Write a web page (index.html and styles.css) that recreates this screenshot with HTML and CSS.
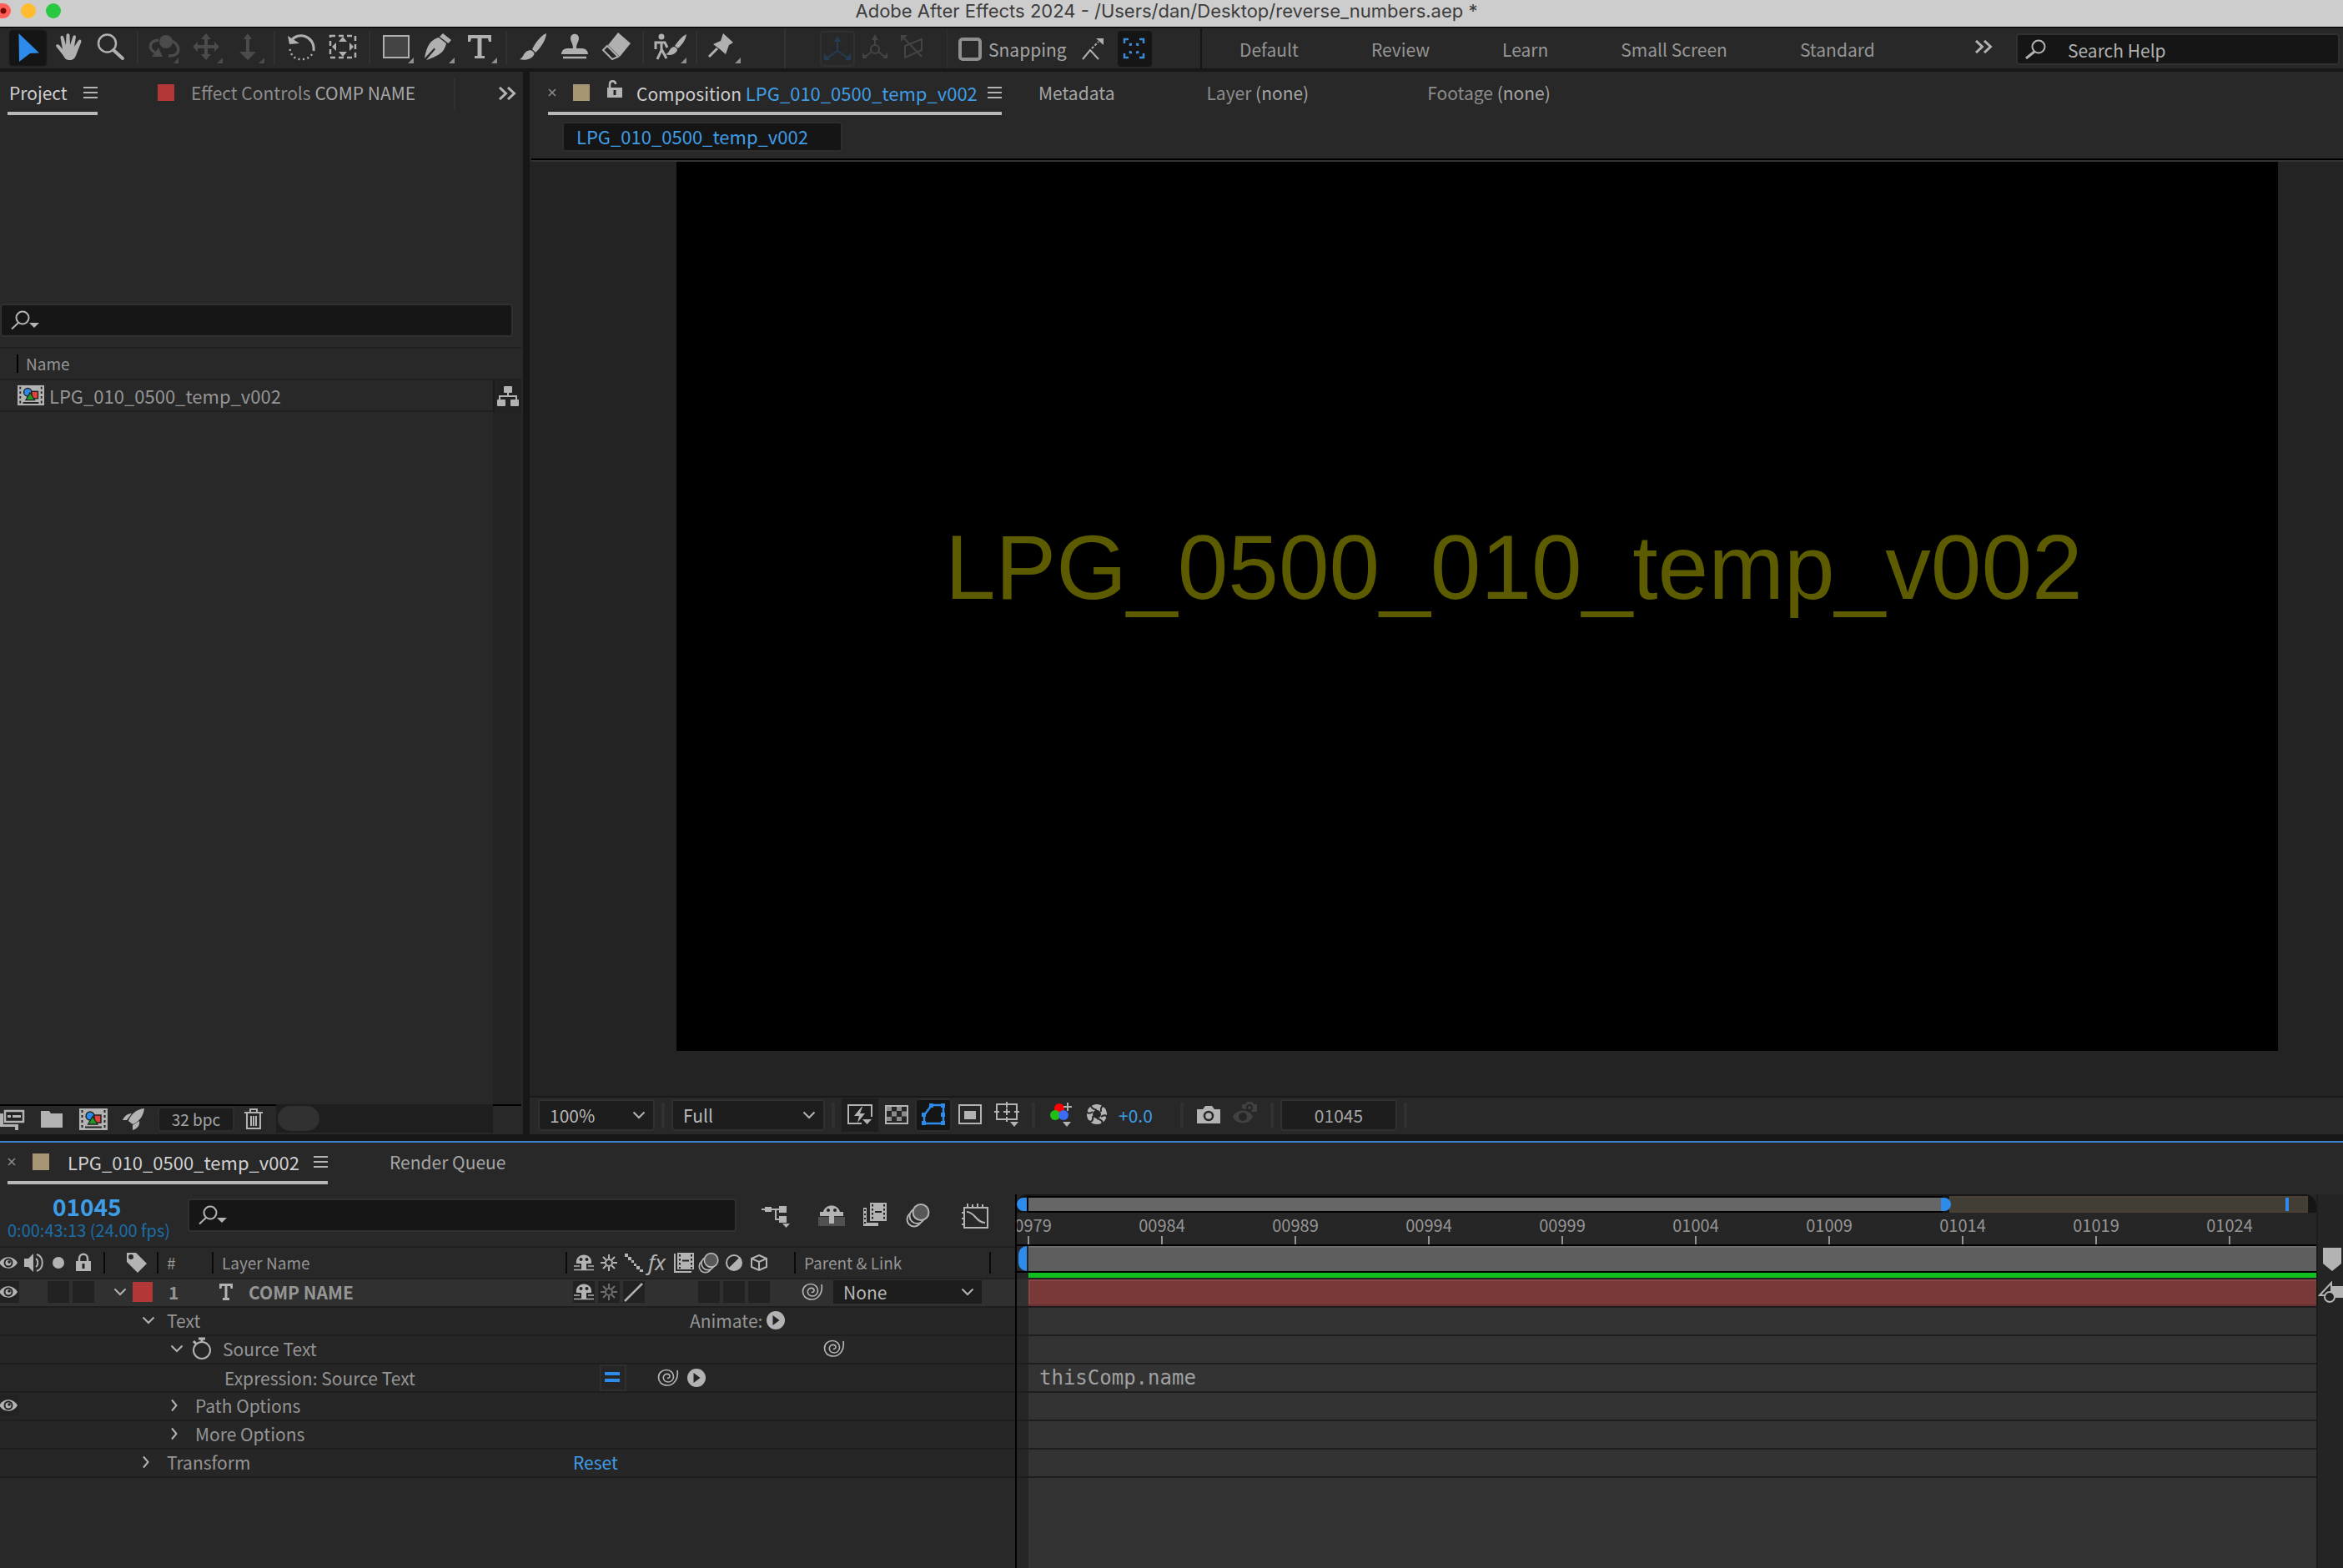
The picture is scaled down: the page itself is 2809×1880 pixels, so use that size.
FILE: index.html
```html
<!DOCTYPE html>
<html lang="en">
<head>
<meta charset="utf-8">
<title>Adobe After Effects 2024</title>
<link rel="stylesheet" href="styles.css">
</head>
<body>
<svg class="sprite" aria-hidden="true">
  <symbol id="eye" viewBox="0 0 26 26"><path d="M2 13C7 4 19 4 24 13C19 22 7 22 2 13Z" fill="#b3b3b3"/><circle cx="13" cy="13" r="5.5" fill="#222"/><circle cx="13" cy="13" r="3.5" fill="#b3b3b3"/><circle cx="14" cy="12" r="1.8" fill="#222"/></symbol>
  <symbol id="down" viewBox="0 0 16 16"><path d="M1.5 4.5L8 11L14.500 4.500" fill="none" stroke="#b3b3b3" stroke-width="2"/></symbol>
  <symbol id="right" viewBox="0 0 16 16"><path d="M2 1.500L7.500 8L2 14.500" fill="none" stroke="#b3b3b3" stroke-width="2"/></symbol>
  <symbol id="spiral" viewBox="0 0 26 26"><path d="M24 4C25.500 13 21 22 12 22C5 22 1.500 17.500 1.500 12.500C1.500 7 6 3.500 11 3.500C16 3.500 19.500 7 19.500 11.500C19.500 15.500 16.500 18 13 18C9.500 18 7.300 15.500 7.300 12.800C7.300 10 9.500 8.300 11.800 8.300C14 8.300 15.500 10 14.800 12C14.300 13.300 12.800 13.700 12 13" fill="none" stroke="#b3b3b3" stroke-width="1.700"/></symbol>
  <symbol id="play" viewBox="0 0 22 22"><circle cx="11" cy="11" r="11" fill="#b3b3b3"/><path d="M7.500 5L15.500 11L7.500 17Z" fill="#222"/></symbol>
  <symbol id="burger" viewBox="0 0 17 16"><path d="M0 2H17M0 8H17M0 14H17" stroke="#b3b3b3" stroke-width="2"/></symbol>
  <symbol id="close" viewBox="0 0 10 10"><path d="M1 1L9 9M9 1L1 9" stroke="#8c8c8c" stroke-width="1.600"/></symbol>
  <symbol id="more" viewBox="0 0 22 16"><path d="M2 1L9.500 8L2 15M12 1L19.500 8L12 15" fill="none" stroke="#b3b3b3" stroke-width="3"/></symbol>
  <symbol id="find" viewBox="0 0 34 24"><circle cx="14" cy="9" r="7.500" fill="none" stroke="#b3b3b3" stroke-width="2"/><path d="M9 15L1 22.500" stroke="#b3b3b3" stroke-width="2"/><path d="M22 15H34L28 21Z" fill="#b3b3b3"/></symbol>
  <symbol id="comp" viewBox="0 0 34 26"><rect width="34" height="26" fill="#b3b3b3"/><path d="M3.500 2V24M30.500 2V24" stroke="#222" stroke-width="2" stroke-dasharray="3 3"/><path d="M7 22.500H27" stroke="#222" stroke-width="2"/><circle cx="13" cy="9" r="5" fill="#2d8ceb" stroke="#222" stroke-width="1.500"/><rect x="18" y="8" width="8" height="9" fill="#e5413c" stroke="#222" stroke-width="1.500"/><path d="M16 9.500L22 19H10.500Z" fill="#1c9a25" stroke="#222" stroke-width="1.300"/></symbol>
  <symbol id="shy" viewBox="0 0 26 26"><path d="M4 14C2 0 24 0 22 14H16V22H10V14Z" fill="#b3b3b3"/><circle cx="9.500" cy="9" r="2" fill="#222"/><circle cx="16.500" cy="9" r="2" fill="#222"/><path d="M1 17H8M18 17H25M1 21.500H25" stroke="#b3b3b3" stroke-width="1.500"/></symbol>
  <symbol id="sun" viewBox="0 0 26 26"><circle cx="13" cy="13" r="4" fill="none" stroke="currentColor" stroke-width="2"/><path d="M13 3V8M13 18V23M3 13H8M18 13H23M6 6L9.500 9.500M16.500 16.500L20 20M20 6L16.500 9.500M9.500 16.500L6 20" stroke="currentColor" stroke-width="2"/></symbol>
  <symbol id="frames" viewBox="0 0 26 26"><path d="M2 2V24H22" fill="none" stroke="#b3b3b3" stroke-width="2"/><rect x="5" y="1" width="20" height="20" fill="#b3b3b3"/><path d="M8 3V20M22 3V20" stroke="#222" stroke-width="2" stroke-dasharray="2.500 2.500"/><path d="M11 10.500H19" stroke="#222" stroke-width="2"/></symbol>
  <symbol id="blur" viewBox="0 0 30 30"><circle cx="10" cy="20" r="8.500" fill="#262626" stroke="#b3b3b3" stroke-width="2"/><circle cx="13.500" cy="16" r="9" fill="#262626" stroke="#b3b3b3" stroke-width="2"/><circle cx="18" cy="11.500" r="9.500" fill="#585858" stroke="#b3b3b3" stroke-width="2"/></symbol>
</svg>

<header class="titlebar">
  <div class="lights"><i class="light light-close"></i><i class="light light-min"></i><i class="light light-max"></i></div>
  <h1 class="window-title">Adobe After Effects 2024 - /Users/dan/Desktop/reverse_numbers.aep *</h1>
</header>

<nav class="toolbar" aria-label="Tools">
  <div class="tools">
    <button class="tool" aria-label="Selection"><svg viewBox="0 0 50 48"><rect x="3" y="2" width="45" height="43" rx="4" fill="#151515" stroke="#1e1e1e"/><path d="M14.500 6L39 29.500L28 30L15 40Z" fill="#2d8ceb"/></svg></button>
    <button class="tool" aria-label="Hand"><svg viewBox="0 0 50 48"><path d="M20 36C17 31 13 26 9.500 22C8 19.500 11 18.500 13 20L17 25L14.500 11C14.500 8.500 17.500 8 18.300 10.500L21 20L21.500 8C22 5.500 25 5.500 25.500 8L26 20L29.500 9.500C30.500 7.500 33 8 33 10.500L31 22L36 14.500C38 12.500 40 14 39.300 16.500L34 30C32 36 30 38 26 38C23 38 21.500 37.500 20 36Z" fill="#b0b0b0"/></svg></button>
    <button class="tool" aria-label="Zoom"><svg viewBox="0 0 50 48"><circle cx="20.500" cy="18" r="10.500" fill="none" stroke="#b0b0b0" stroke-width="2.500"/><path d="M28 26L39 36" stroke="#b0b0b0" stroke-width="4" stroke-linecap="round"/></svg></button>
    <i class="tool-sep"></i>
    <button class="tool" aria-label="Orbit camera"><svg viewBox="0 0 50 48"><circle cx="27" cy="16" r="8" fill="#4b4b4b"/><path d="M18 14C7 15 5 24 14 29M34 15C45 20 45 34 30 33" fill="none" stroke="#4b4b4b" stroke-width="3.500"/><path d="M18 23L23 34H10Z" fill="#4b4b4b"/><path d="M42 35V42H36Z" fill="#4b4b4b"/></svg></button>
    <button class="tool" aria-label="Pan camera"><svg viewBox="0 0 50 48"><path d="M25 11V33M13 22H37" stroke="#4b4b4b" stroke-width="4"/><path d="M25 6L31 13H19ZM25 38L31 31H19ZM9 22L15 16V28ZM41 22L35 16V28Z" fill="#4b4b4b"/><path d="M45 35V42H38Z" fill="#4b4b4b"/></svg></button>
    <button class="tool" aria-label="Dolly camera"><svg viewBox="0 0 50 48"><path d="M25 10V32" stroke="#4b4b4b" stroke-width="4"/><path d="M25 6L30 13H20ZM25 38L35 28H15Z" fill="#4b4b4b"/><path d="M45 35V42H38Z" fill="#4b4b4b"/></svg></button>
    <i class="tool-sep"></i>
    <button class="tool" aria-label="Rotation"><svg viewBox="0 0 50 48"><path d="M13 15C21 3 42 9 40 27" fill="none" stroke="#b0b0b0" stroke-width="3"/><path d="M9 9L11 19L23 18Z" fill="#b0b0b0"/><path d="M38 31C34 38 20 40 14 32L11 24" fill="none" stroke="#b0b0b0" stroke-width="2.500" stroke-dasharray="2 3.500"/></svg></button>
    <button class="tool" aria-label="Pan behind"><svg viewBox="0 0 50 48"><rect x="10" y="9" width="30" height="26" fill="none" stroke="#b0b0b0" stroke-width="2.500" stroke-dasharray="6 4"/><path d="M25 10L30 16H20ZM25 34L30 28H20ZM12 22L17 17V27ZM38 22L33 17V27Z" fill="#b0b0b0"/></svg></button>
    <i class="tool-sep"></i>
    <button class="tool" aria-label="Rectangle"><svg viewBox="0 0 50 48"><rect x="10" y="9" width="30" height="26" fill="#444" stroke="#b0b0b0" stroke-width="2"/><path d="M46 35V42H39Z" fill="#8f8f8f"/></svg></button>
    <button class="tool" aria-label="Pen"><svg viewBox="0 0 50 48"><path d="M26 11L35 18C33 27 29 32 11 38L22 25L20.500 23.500L9 36C12 20 16 14 26 11Z" fill="#b0b0b0"/><path d="M31 6L41 14L37.500 18L27 10Z" fill="#b0b0b0"/><path d="M45 35V42H38Z" fill="#8f8f8f"/></svg></button>
    <button class="tool" aria-label="Type"><svg viewBox="0 0 50 48"><path d="M11 8H39V16H36L35 12H27.500V33H31V36H19V33H22.500V12H15L14 16H11Z" fill="#b0b0b0"/><path d="M46 35V42H39Z" fill="#8f8f8f"/></svg></button>
    <i class="tool-sep"></i>
    <button class="tool" aria-label="Brush"><svg viewBox="0 0 50 48"><path d="M41 6C41 13 34 24 28 29L24 25C28 17 34 9 41 6Z" fill="#b0b0b0"/><path d="M22 26C25 27 27 29 26.500 31C24 37 16 39 9 37C15 34 13 27 22 26Z" fill="#b0b0b0"/></svg></button>
    <button class="tool" aria-label="Clone stamp"><svg viewBox="0 0 50 48"><path d="M20 12C20 5 30 5 30 12C30 16 27 18 27 24H34C38 24 41 27 41 31H9C9 27 12 24 16 24H23C23 18 20 16 20 12Z" fill="#b0b0b0"/><path d="M11 35H39" stroke="#b0b0b0" stroke-width="2.500"/></svg></button>
    <button class="tool" aria-label="Eraser"><svg viewBox="0 0 50 48"><path d="M27 5L42 18L29 34L15 20Z" fill="#b0b0b0"/><path d="M14 21L9 26L20 37L27 34Z" fill="none" stroke="#b0b0b0" stroke-width="2"/></svg></button>
    <i class="tool-sep"></i>
    <button class="tool" aria-label="Roto brush"><svg viewBox="0 0 50 48"><circle cx="15" cy="10" r="3.500" fill="#b0b0b0"/><path d="M8 25V17H19L22 23M15 16V26L10 37M15 25L21 36" fill="none" stroke="#b0b0b0" stroke-width="3"/><path d="M45 7C44 15 39 20 35 24L31 21C35 15 39 10 45 7ZM30 22C34 23 35 26 33 28C30 32 24 33 20 31C25 30 24 23 30 22Z" fill="#b0b0b0"/><path d="M45 35V42H38Z" fill="#8f8f8f"/></svg></button>
    <i class="tool-sep"></i>
    <button class="tool" aria-label="Puppet pin"><svg viewBox="0 0 50 48"><path d="M25 6L37 17L32 20L28 31L21 25L13 19L22 15Z" fill="#b0b0b0"/><path d="M18 24L8 34" stroke="#b0b0b0" stroke-width="3"/><path d="M46 35V42H39Z" fill="#8f8f8f"/></svg></button>
  </div>
  <div class="axis-tools">
    <button class="tool" aria-label="Local axis"><svg viewBox="0 0 50 48"><rect x="5" y="4" width="40" height="41" rx="3" fill="none" stroke="#303030" stroke-width="2"/><path d="M25 12V27L12 36M25 27L38 36" fill="none" stroke="#253c56" stroke-width="2"/><path d="M25 9L29 16H21ZM9 38V30L16 38ZM41 38V30L34 38Z" fill="#253c56"/></svg></button>
    <button class="tool" aria-label="World axis"><svg viewBox="0 0 50 48"><circle cx="20" cy="25" r="5" fill="none" stroke="#444" stroke-width="2"/><path d="M20 9V20M16 28L7 35M24 28L33 35" stroke="#444" stroke-width="2"/><path d="M20 7L24 14H16ZM5 36V29L11 36ZM35 36V29L29 36Z" fill="#444"/></svg></button>
    <button class="tool" aria-label="View axis"><svg viewBox="0 0 50 48"><path d="M6 20V35L26 26V13L6 21M5 12L26 34" fill="none" stroke="#444" stroke-width="2"/><path d="M1 8H9L1 16Z" fill="#444"/></svg></button>
  </div>
  <label class="snapping"><input type="checkbox">Snapping</label>
  <button class="snap-btn" aria-label="Snap edges"><svg viewBox="0 0 42 48"><path d="M8 37L17 26L27 37" fill="none" stroke="#b0b0b0" stroke-width="2"/><path d="M19 24L27 16" stroke="#b0b0b0" stroke-width="2" stroke-dasharray="3 2"/><path d="M24 12H33V20Z" fill="#b0b0b0"/></svg></button>
  <button class="snap-btn" aria-label="Snap features"><svg viewBox="0 0 42 48"><rect x="1" y="3" width="41" height="43" rx="4" fill="#151515"/><path d="M9 18V13H14M27 13H32V18M32 30V35H27M14 35H9V30M16 21V19H18M23 19H25V21M25 27V29H23M18 29H16V27" fill="none" stroke="#3d8ad8" stroke-width="2.500"/></svg></button>
  <div class="workspaces">
    <button>Default</button><button>Review</button><button>Learn</button><button>Small Screen</button><button>Standard</button>
  </div>
  <button class="ws-more" aria-label="More workspaces"><svg viewBox="0 0 22 16"><use href="#more"/></svg></button>
  <label class="help"><svg viewBox="0 0 25 24"><circle cx="16" cy="9" r="7.500" fill="none" stroke="#b3b3b3" stroke-width="2"/><path d="M11 15L1 23" stroke="#b3b3b3" stroke-width="3"/></svg><input type="text" placeholder="Search Help" aria-label="Search Help"></label>
</nav>

<main class="panels">
  <section class="project">
    <div class="tabs">
      <button class="tab tab-project on">Project<svg class="burger" viewBox="0 0 17 16"><use href="#burger"/></svg></button>
      <button class="tab tab-effects"><i class="chip red"></i><span>Effect Controls <b>COMP NAME</b></span></button>
      <button class="tab-more" aria-label="More panels"><svg viewBox="0 0 22 16"><use href="#more"/></svg></button>
    </div>
    <div class="preview"></div>
    <label class="search project-search"><svg viewBox="0 0 34 24"><use href="#find"/></svg><input type="text" aria-label="Search project"></label>
    <div class="files">
      <table class="file-table">
        <colgroup><col><col class="flow-col"></colgroup>
        <thead><tr><th colspan="2">Name</th></tr></thead>
        <tbody><tr><td class="file"><span class="comp-name"><svg viewBox="0 0 34 26"><use href="#comp"/></svg>LPG_010_0500_temp_v002</span></td><td class="flow"><svg viewBox="0 0 28 26"><path d="M14 8V13M4 18V13H24V18" fill="none" stroke="#b3b3b3" stroke-width="2"/><rect x="9" y="1" width="10" height="8" rx="1" fill="#b3b3b3"/><rect x="1" y="17" width="10" height="8" rx="1" fill="#b3b3b3"/><rect x="17" y="17" width="10" height="8" rx="1" fill="#b3b3b3"/></svg></td></tr></tbody>
      </table>
      <div class="file-rest"><i></i></div>
    </div>
    <footer class="project-bar">
      <div class="project-actions">
        <button class="pa-1" aria-label="Interpret footage"><svg viewBox="0 0 30 26"><path d="M0 6H4V19H22V26H18V22H0Z" fill="#b3b3b3"/><rect x="6" y="3" width="22" height="13" fill="#222" stroke="#b3b3b3" stroke-width="2.500"/><path d="M9 9.500H13M15 9.500H25" stroke="#b3b3b3" stroke-width="3"/></svg></button>
        <button class="pa-2" aria-label="New folder"><svg viewBox="0 0 28 24"><path d="M1 2H11L13 5H27V22H1Z" fill="#b3b3b3"/></svg></button>
        <button class="pa-3" aria-label="New composition"><svg viewBox="0 0 34 26"><use href="#comp"/></svg></button>
        <button class="pa-4" aria-label="Project settings"><svg viewBox="0 0 28 28"><path d="M27 1C17 2 11 8 8 16L13 20C21 17 26 10 27 1ZM12 7C6 7 3 11 1 15H6ZM21 16C22 21 19 25 13 27V21Z" fill="#b3b3b3"/></svg></button>
        <button class="bpc">32 bpc</button>
        <button class="pa-5" aria-label="Delete"><svg viewBox="0 0 22 26"><path d="M0 5H22M7 4V1H15V4M3 6V24H19V6M8 9V21M11 9V21M14 9V21" fill="none" stroke="#b3b3b3" stroke-width="2"/></svg></button>
      </div>
      <div class="hscroll"><i></i></div><div class="hscroll-end"></div>
    </footer>
  </section>

  <section class="composition">
    <div class="tabs">
      <button class="tab tab-comp on"><svg class="x" viewBox="0 0 10 10"><use href="#close"/></svg><i class="chip tan"></i><svg class="lock" viewBox="0 0 18 22"><path d="M3 10V5C3 0 10 0 10 5" fill="none" stroke="#b3b3b3" stroke-width="2.500"/><rect y="9" width="18" height="12" fill="#b3b3b3"/><path d="M9 12V18" stroke="#222" stroke-width="3"/></svg><span>Composition <em class="comp-name">LPG_010_0500_temp_v002</em></span><svg class="burger" viewBox="0 0 17 16"><use href="#burger"/></svg></button>
      <button class="tab tab-meta"><b>Metadata</b></button>
      <button class="tab tab-layer"><span>Layer <b>(none)</b></span></button>
      <button class="tab tab-foot"><span>Footage <b>(none)</b></span></button>
    </div>
    <div class="crumbs"><button class="crumb comp-name">LPG_010_0500_temp_v002</button></div>
    <div class="viewer"><div class="canvas">LPG_0500_010_temp_v002</div></div>
    <footer class="viewer-bar">
      <span class="select zoom"><select aria-label="Magnification"><option>100%</option></select><svg viewBox="0 0 16 16"><use href="#down"/></svg></span>
      <i class="vb-sep"></i>
      <span class="select quality"><select aria-label="Resolution"><option>Full</option></select><svg viewBox="0 0 16 16"><use href="#down"/></svg></span>
      <i class="vb-sep"></i>
      <div class="view-btns">
        <button class="vb dark" aria-label="Fast previews"><svg viewBox="0 0 44 40"><path d="M36 22V8H8V30H24" fill="none" stroke="#b3b3b3" stroke-width="2"/><path d="M24 10L15 21H21L19 29L28 18H22L25 10Z" fill="#b3b3b3"/><path d="M25 25H36L30.500 31Z" fill="#b3b3b3"/></svg></button>
        <button class="vb" aria-label="Transparency grid"><svg viewBox="0 0 44 40"><rect x="9" y="9" width="26" height="21" fill="#262626" stroke="#b3b3b3" stroke-width="2"/><path d="M10 12.500H34M10 24.500H34" stroke="#8b8b8b" stroke-width="5" stroke-dasharray="6 6"/><path d="M16 18.500H34" stroke="#8b8b8b" stroke-width="6" stroke-dasharray="6 6"/></svg></button>
        <button class="vb active" aria-label="Mask visibility"><svg viewBox="0 0 44 40"><path d="M11 30V20L20 8H34V30Z" fill="none" stroke="#2d8ceb" stroke-width="2.500"/><path d="M8 27h5v5h-5zM8 17h5v5h-5zM17 6h5v5h-5zM31 6h5v5h-5zM31 17h5v5h-5zM31 27h5v5h-5z" fill="#2d8ceb"/></svg></button>
        <button class="vb" aria-label="Region of interest"><svg viewBox="0 0 44 40"><rect x="9" y="8" width="26" height="22" fill="none" stroke="#b3b3b3" stroke-width="2"/><rect x="15" y="15" width="14" height="10" fill="#b3b3b3"/></svg></button>
        <button class="vb" aria-label="Guides"><svg viewBox="0 0 44 40"><rect x="10" y="7" width="24" height="18" fill="none" stroke="#b3b3b3" stroke-width="2"/><path d="M22 4V11M22 22V28M7 16H13M31 16H37M18 16H26M22 12V20" stroke="#b3b3b3" stroke-width="2"/><path d="M26 28H36L31 34Z" fill="#b3b3b3"/></svg></button>
      </div>
      <i class="vb-sep"></i>
      <button class="vb" aria-label="Channels"><svg viewBox="0 0 44 40"><circle cx="21" cy="12" r="6" fill="#f00"/><circle cx="16" cy="20" r="6" fill="#1fbf14"/><circle cx="26" cy="20" r="6" fill="#3a6cf5"/><path d="M31 5V15M26 10H36" stroke="#b3b3b3" stroke-width="2"/><path d="M25 28H35L30 34Z" fill="#b3b3b3"/></svg></button>
      <button class="vb" aria-label="Reset exposure"><svg viewBox="0 0 44 40"><circle cx="22" cy="19" r="12" fill="#b3b3b3"/><circle cx="22" cy="19" r="5" fill="#262626"/><path d="M22 14C17 13 14 10 15 7M27 16C26 11 28 8 32 10M27 22C31 19 34 20 34 23M22 24C27 25 30 28 28 31M17 21C18 26 16 29 12 27M17 16C13 19 10 18 10 15" fill="none" stroke="#262626" stroke-width="2"/></svg></button>
      <button class="exposure">+0.0</button>
      <i class="vb-sep"></i>
      <button class="vb" aria-label="Take snapshot"><svg viewBox="0 0 44 40"><path d="M8 13H15L18 9H26L29 13H36V30H8Z" fill="#b3b3b3"/><circle cx="22" cy="21" r="5" fill="none" stroke="#262626" stroke-width="2.500"/></svg></button>
      <button class="vb" aria-label="Show snapshot"><svg viewBox="0 0 44 40"><path d="M7 22C11 12 27 12 31 22C27 32 11 32 7 22Z" fill="#414141"/><circle cx="19" cy="22" r="5" fill="#262626"/><path d="M18 7H22L24 4H30L32 7H36V16H30L27 14L18 12Z" fill="#414141"/><circle cx="27" cy="11" r="3" fill="none" stroke="#262626" stroke-width="2"/></svg></button>
      <i class="vb-sep"></i>
      <button class="frame-no">01045</button>
      <i class="vb-sep"></i>
    </footer>
  </section>
</main>

<section class="timeline">
  <div class="tabs">
    <button class="tab tab-tl on"><svg class="x" viewBox="0 0 10 10"><use href="#close"/></svg><i class="chip tan"></i><span class="comp-name">LPG_010_0500_temp_v002</span><svg class="burger" viewBox="0 0 17 16"><use href="#burger"/></svg></button>
    <button class="tab tab-rq"><b>Render Queue</b></button>
  </div>
  <div class="tl-body">
    <div class="outline">
      <div class="tl-top">
        <div class="time"><strong>01045</strong><span>0:00:43:13 (24.00 fps)</span></div>
        <label class="search"><svg viewBox="0 0 34 24"><use href="#find"/></svg><input type="text" aria-label="Search layers"></label>
        <button class="tt t1" aria-label="Mini flowchart"><svg viewBox="0 0 34 30"><path d="M0 8H28M17 8V20H28" fill="none" stroke="#b3b3b3" stroke-width="2"/><path d="M4 5h8v6h-8zM21 4h9v8h-9zM21 16h9v8h-9zM25 25H34L29.500 30Z" fill="#b3b3b3"/></svg></button>
        <button class="tt t2" aria-label="Hide shy layers"><svg viewBox="0 0 34 30"><rect x="1" y="17" width="32" height="11" fill="#505050"/><path d="M3 11H7C9 1 25 1 27 11H31V16H3ZM14 15H20V25H14Z" fill="#b3b3b3"/><circle cx="13" cy="9" r="2" fill="#222"/><circle cx="21" cy="9" r="2" fill="#222"/></svg></button>
        <button class="tt t3" aria-label="Frame blending"><svg viewBox="0 0 28 28"><path d="M2 6V26H18" fill="none" stroke="#b3b3b3" stroke-width="4"/><path d="M2 8V26" stroke="#222" stroke-width="2" stroke-dasharray="2 3"/><rect x="8" y="0" width="20" height="22" fill="#b3b3b3"/><path d="M11 2V21M25 2V21" stroke="#222" stroke-width="2" stroke-dasharray="2.500 2.500"/><path d="M14 11H22" stroke="#222" stroke-width="2"/></svg></button>
        <button class="tt t4" aria-label="Motion blur"><svg viewBox="0 0 30 30"><use href="#blur"/></svg></button>
        <button class="tt t5" aria-label="Graph editor"><svg viewBox="0 0 34 32"><rect x="4" y="6" width="28" height="24" fill="none" stroke="#b3b3b3" stroke-width="2"/><path d="M8 6V1M14 6V2M20 6V1M26 6V2M4 12H1M4 19H1M4 26H1M7 11C17 11 18 24 29 24" fill="none" stroke="#b3b3b3" stroke-width="2"/></svg></button>
      </div>
      <div class="cols head">
        <div class="av">
          <svg class="first" viewBox="0 0 26 26"><use href="#eye"/></svg>
          <svg viewBox="0 0 26 26"><path d="M2 8H7L13 2V24L7 18H2Z" fill="#b3b3b3"/><path d="M16 8C19 10 19 16 16 18M17 3C26 6 26 20 17 23" fill="none" stroke="#b3b3b3" stroke-width="2"/></svg>
          <svg viewBox="0 0 26 26"><circle cx="13" cy="13" r="7" fill="#b3b3b3"/></svg>
          <svg viewBox="0 0 26 26"><path d="M8 12V8C8 1 18 1 18 8V12" fill="none" stroke="#b3b3b3" stroke-width="2.500"/><rect x="4" y="11" width="18" height="12" fill="#b3b3b3"/><path d="M13 14V20" stroke="#222" stroke-width="3"/></svg>
        </div>
        <div class="cell tag"><svg viewBox="0 0 26 26"><path d="M1 1H12L25 14L14 25L1 12Z" fill="#b3b3b3"/><circle cx="6" cy="6" r="3" fill="#262626"/></svg></div>
        <div class="cell">#</div>
        <div class="cell">Layer Name</div>
        <div class="cell switches">
          <svg viewBox="0 0 26 26"><use href="#shy"/></svg>
          <svg viewBox="0 0 26 26"><use href="#sun"/></svg>
          <svg viewBox="0 0 26 26"><path d="M2 2h4v4h-4zM6 6h4v4h-4zM10 10h3v3h-3zM13 14h3v3h-3zM16 17h4v4h-4zM20 21h4v3h-4z" fill="#b3b3b3"/></svg>
          <span class="fx">fx</span>
          <svg viewBox="0 0 26 26"><use href="#frames"/></svg>
          <svg viewBox="0 0 30 30"><use href="#blur"/></svg>
          <svg viewBox="0 0 26 26"><circle cx="13" cy="13" r="9" fill="#262626" stroke="#b3b3b3" stroke-width="2"/><path d="M20 6A10 10 0 0 1 6 20Z" fill="#b3b3b3"/></svg>
          <svg viewBox="0 0 26 26"><path d="M13 4L22 8V18L13 22L4 18V8ZM4 8L13 12L22 8M13 12V22" fill="none" stroke="#b3b3b3" stroke-width="2"/></svg>
        </div>
        <div class="cell parent-h">Parent &amp; Link</div>
        <div class="cell"></div>
      </div>
      <div class="cols row layer">
        <div class="av"><svg class="first box" viewBox="0 0 26 26"><use href="#eye"/></svg><i></i><i class="box"></i><i class="box"></i></div>
        <div class="twirl"><svg class="arrow" viewBox="0 0 16 16"><use href="#down"/></svg><i class="swatch"></i></div>
        <div class="num">1</div>
        <div class="lname"><svg viewBox="0 0 18 22"><path d="M1 1H17V7H14.500L14 4H10.500V18H13V21H5V18H7.500V4H4L3.500 7H1Z" fill="#b3b3b3"/></svg>COMP NAME</div>
        <div class="switches">
          <svg class="box" viewBox="0 0 26 26"><use href="#shy"/></svg><svg class="box dim" viewBox="0 0 26 26"><use href="#sun"/></svg><svg class="box" viewBox="0 0 26 26"><path d="M2 24L23 3" stroke="#b3b3b3" stroke-width="2.500"/></svg><i></i><i></i><i class="box"></i><i class="box"></i><i class="box"></i>
        </div>
        <div class="parent"><svg viewBox="0 0 26 26"><use href="#spiral"/></svg><span class="select"><select aria-label="Parent"><option>None</option></select><svg viewBox="0 0 16 16"><use href="#down"/></svg></span></div>
      </div>
      <div class="cols row">
        <div class="av"></div>
        <div class="prop l1"><svg class="arrow" viewBox="0 0 16 16"><use href="#down"/></svg>Text</div>
        <div class="tail animate">Animate:<button aria-label="Animate menu"><svg viewBox="0 0 22 22"><use href="#play"/></svg></button></div>
      </div>
      <div class="cols row">
        <div class="av"></div>
        <div class="prop l2"><svg class="arrow short" viewBox="0 0 16 16"><use href="#down"/></svg><svg class="watch" viewBox="0 0 24 28"><circle cx="12" cy="16" r="10" fill="none" stroke="#b3b3b3" stroke-width="2"/><path d="M8 2H16M12 2V6M2 5L5 8" stroke="#b3b3b3" stroke-width="3"/></svg>Source Text</div>
        <div class="tail link"><svg viewBox="0 0 26 26"><use href="#spiral"/></svg></div>
      </div>
      <div class="cols row">
        <div class="av"></div>
        <div class="prop l3">Expression: Source Text</div>
        <div class="tail expr"><button class="eq" aria-label="Enable expression"><svg viewBox="0 0 28 28"><path d="M4 9H22M4 17H22" stroke="#2d8ceb" stroke-width="4"/></svg></button><svg viewBox="0 0 26 26"><use href="#spiral"/></svg><button aria-label="Expression language menu"><svg viewBox="0 0 22 22"><use href="#play"/></svg></button></div>
      </div>
      <div class="cols row">
        <div class="av"><svg class="first box" viewBox="0 0 26 26"><use href="#eye"/></svg></div>
        <div class="prop l2"><svg class="arrow" viewBox="0 0 16 16"><use href="#right"/></svg>Path Options</div>
      </div>
      <div class="cols row">
        <div class="av"></div>
        <div class="prop l2"><svg class="arrow" viewBox="0 0 16 16"><use href="#right"/></svg>More Options</div>
      </div>
      <div class="cols row">
        <div class="av"></div>
        <div class="prop l1"><svg class="arrow" viewBox="0 0 16 16"><use href="#right"/></svg>Transform</div>
        <div class="tail"><button class="reset">Reset</button></div>
      </div>
    </div>

    <div class="tracks">
      <div class="nav"><i class="grip grip-l"></i><i class="nav-range"></i><i class="grip grip-r"></i><div class="nav-rest"><i></i></div></div>
      <div class="ruler"><span>00979</span><span>00984</span><span>00989</span><span>00994</span><span>00999</span><span>01004</span><span>01009</span><span>01014</span><span>01019</span><span>01024</span></div>
      <div class="work"><i class="grip grip-l"></i><i class="work-range"></i></div>
      <div class="cache"></div>
      <div class="track layer-track"><i></i></div>
      <div class="track"><i></i></div>
      <div class="track"><i></i></div>
      <div class="track"><code>thisComp.name</code></div>
      <div class="track"><i></i></div>
      <div class="track"><i></i></div>
      <div class="track"><i></i></div>
      <div class="track-rest"><i></i></div>
    </div>
    <div class="side">
      <svg class="marker" viewBox="0 0 24 28"><path d="M1 0H23V19L12 28L1 19Z" fill="#b3b3b3"/></svg>
      <svg class="shape" viewBox="0 0 30 28"><rect x="15" y="6" width="15" height="14" fill="#b3b3b3"/><path d="M2 17L16 2V17Z" fill="#222" stroke="#b3b3b3" stroke-width="2"/><circle cx="14" cy="19" r="6" fill="#222" stroke="#b3b3b3" stroke-width="2"/></svg>
    </div>
  </div>
</section>
</body>
</html>
```
FILE: styles.css
```css
* { box-sizing: border-box; }
body {
  margin: 0;
  min-height: 100vh;
  display: flex;
  flex-direction: column;
  background: #171717;
  color: #959595;
  font: 21px/30px "Noto Sans CJK SC", "Noto Sans", sans-serif;
}
button, input, select { font: inherit; color: inherit; background: none; border: 0; padding: 0; margin: 0; }
button { display: block; white-space: nowrap; }
svg { display: block; flex: none; }
b { font-weight: 400; color: #a5a5a5; }
em { font-style: normal; color: #3f9de6; }
.sprite { position: absolute; width: 0; height: 0; }
.comp-name { font-size: 22px; }

/* window title */
.titlebar { display: flex; align-items: center; height: 33px; padding: 0 12px 6px 0; background: #cdcdcd; border-bottom: 1px solid #000; }
.lights { display: flex; gap: 12px; width: 73px; margin-right: -73px; }
.light { width: 18px; height: 18px; border-radius: 50%; }
.light-close { width: 13px; border-radius: 0 9px 9px 0; background: radial-gradient(circle at 4px 9px, #7a0a06 3px, #ff5f57 4px); }
.light-min { background: #febc2e; }
.light-max { background: #28c840; }
.window-title { flex: 1; margin: 0; text-align: center; font: 400 22px/26px Inter, sans-serif; color: #3c3c3c; }

/* tool bar */
.toolbar { display: flex; align-items: stretch; height: 49px; background: #282828; border-top: 1px solid #1c1c1c; margin-bottom: 4px; }
.tools { display: flex; padding-left: 8px; width: 942px; border-right: 2px solid #323232; }
.tool svg { width: 50px; height: 48px; }
.tool-sep { width: 14px; background: linear-gradient(#313131, #313131) center / 2px 40px no-repeat; }
.axis-tools { display: flex; padding-left: 37px; width: 194px; border-right: 1px solid #313131; }
.snapping { display: flex; align-items: center; gap: 8px; width: 154px; padding: 2px 0 0 13px; color: #a5a5a5; }
.snapping input { appearance: none; width: 28px; height: 28px; border: 4px solid #8f8f8f; border-radius: 5px; }
.snap-btn { margin-right: 6px; }
.snap-btn svg { width: 42px; height: 48px; }
.snap-btn + .snap-btn { margin: 0 0 0 1px; }
.workspaces { display: flex; gap: 87px; margin-left: 58px; padding: 2px 0 0 45px; border-left: 2px solid #151515; }
.ws-more { margin-left: auto; padding: 0 20px 4px 0; }
.ws-more svg { width: 22px; height: 16px; }
.help { display: flex; align-items: center; gap: 26px; width: 388px; height: 38px; margin: 6px 4px 0 8px; padding-left: 9px; background: #151515; border: 2px solid #303030; border-radius: 4px; }
.help svg { width: 25px; height: 24px; }
.help input { flex: 1; min-width: 0; padding-top: 2px; }
.help input::placeholder { color: #b0b0b0; opacity: 1; }

/* panel tabs */
.tabs { display: flex; height: 56px; }
.tab { display: flex; align-items: center; height: 52px; padding-top: 2px; border-bottom: 4px solid transparent; color: #8c8c8c; }
.tab.on { border-color: #b8b8b8; color: #d0d0d0; }
.chip { width: 20px; height: 20px; }
.red { background: #b43737; }
.tan { background: #a79674; }
.x { width: 10px; height: 10px; }
.burger { width: 17px; height: 16px; }

.panels { display: grid; grid-template-columns: 627px 1fr; column-gap: 8px; padding-bottom: 8px; }
.project, .composition { display: flex; flex-direction: column; background: #282828; min-width: 0; }

.tab-project { margin-left: 9px; padding-left: 2px; width: 108px; justify-content: space-between; }
.tab-effects { margin-left: 72px; gap: 20px; }
.tab-more { margin-left: auto; height: 38px; margin-top: 8px; padding: 0 8px 2px 51px; border-left: 2px solid #313131; }
.tab-more svg { width: 22px; height: 16px; }
.preview { height: 222px; }
.search { display: flex; align-items: center; gap: 8px; height: 40px; padding-left: 11px; background: #161616; border: 2px solid #303030; border-radius: 4px; }
.search svg { width: 34px; height: 24px; }
.search input { flex: 1; min-width: 0; }
.project-search { margin-right: 12px; }
.files { flex: 1; display: flex; flex-direction: column; margin: 12px 2px 0 0; border-top: 2px solid #202020; }
.file-table { width: 100%; border-spacing: 0; table-layout: fixed; }
.flow-col { width: 34px; }
.file-table th { height: 38px; padding: 0 0 0 31px; text-align: left; font-weight: 400; font-size: 19px; line-height: 30px; border-bottom: 2px solid #202020; background: linear-gradient(#000, #000) 20px center / 2px 22px no-repeat; }
.file-table td { height: 38px; padding: 0; }
.file { border-bottom: 2px solid #202020; }
.file span { display: flex; align-items: center; gap: 6px; padding-left: 21px; }
.file svg { width: 32px; height: 26px; }
.flow { background: #222; border-left: 2px solid #1b1b1b; }
.flow svg { width: 28px; height: 26px; margin-left: 2px; }
.file-rest { flex: 1; display: flex; justify-content: flex-end; }
.file-rest i { width: 34px; background: #232323; }
.project-bar { display: flex; height: 36px; }
.project-actions { display: flex; align-items: center; width: 331px; padding-bottom: 2px; border-top: 2px solid #000; }
.pa-1 svg { width: 30px; height: 26px; }
.pa-2 { margin-left: 18px; }
.pa-2 svg { width: 28px; height: 24px; }
.pa-3 { margin-left: 19px; }
.pa-3 svg { width: 34px; height: 26px; }
.pa-4 { margin-left: 17px; }
.pa-4 svg { width: 28px; height: 28px; }
.bpc { width: 92px; height: 30px; margin-left: 15px; font-size: 19px; line-height: 26px; color: #a5a5a5; background: #1d1d1d; border: 2px solid #2d2d2d; border-radius: 4px; }
.pa-5 { margin-left: 12px; }
.pa-5 svg { width: 22px; height: 26px; }
.hscroll { flex: 1; margin-bottom: 2px; padding: 2px; background: #1e1e1e; }
.hscroll i { display: block; width: 50px; height: 30px; border-radius: 16px; background: #313131; }
.hscroll-end { width: 34px; margin-right: 2px; border-top: 2px solid #000; }

/* composition viewer */
.tab-comp { margin-left: 22px; width: 544px; }
.tab-comp .chip { margin: 0 21px 0 20px; }
.tab-comp span { margin-left: 17px; }
.tab-comp .burger, .tab-tl .burger { margin-left: auto; }
.lock { width: 18px; height: 22px; margin-bottom: 8px; }
.tab-meta { margin-left: 44px; }
.tab-layer { margin-left: 110px; }
.tab-foot { margin-left: 142px; }
.crumbs { height: 52px; padding: 4px 0 0 37px; border-bottom: 2px solid #333; box-shadow: inset 0 -2px #000; margin-left: 2px; }
.crumb { width: 336px; height: 36px; padding: 0 0 2px 15px; text-align: left; color: #3f9de6; background: #151515; border: 2px solid #2d2d2d; border-radius: 4px; }
.viewer { padding: 0 78px 54px 176px; background: #232323; }
.canvas { display: flex; align-items: center; aspect-ratio: 1920 / 1066; padding: 0 0 94px 322px; background: #000; color: #5c5b00; font: 109px/120px "Liberation Sans", Arial, sans-serif; white-space: nowrap; }
.viewer-bar { display: flex; align-items: center; height: 46px; padding: 0 0 2px 10px; border-top: 2px solid #191919; }
.select { display: grid; align-items: center; background: #1d1d1d; border: 2px solid #303030; border-radius: 4px; color: #b8b8b8; }
.select select { grid-area: 1 / 1; appearance: none; width: 100%; height: 100%; padding-left: 12px; }
.select svg { grid-area: 1 / 1; justify-self: end; width: 16px; height: 16px; margin-right: 9px; pointer-events: none; }
.zoom { width: 140px; height: 38px; }
.quality { width: 184px; height: 38px; }
.vb-sep { width: 4px; height: 30px; margin: 0 8px; background: #313131; }
.view-btns { display: flex; }
.vb, .vb svg { width: 44px; height: 40px; }
.dark { background: #1e1e1e; }
.active { background: #151515; box-shadow: inset 0 0 0 2px #2d2d2d; border-radius: 4px; }
.exposure { width: 66px; margin-left: 4px; text-align: left; color: #3f9de6; }
.frame-no { width: 140px; height: 38px; color: #a5a5a5; background: #1d1d1d; border: 2px solid #303030; border-radius: 4px; }

/* timeline */
.timeline { flex: 1; display: flex; flex-direction: column; background: #282828; border-top: 2px solid #3a7fd0; }
.timeline .tabs { height: 62px; }
.timeline .tab { height: 50px; padding-top: 0; }
.tab-tl { margin-left: 9px; width: 384px; }
.tab-tl .chip { margin: 0 22px 0 20px; }
.tab-rq { margin-left: 74px; }
.tl-body { flex: 1; display: grid; grid-template-columns: 1219px 1fr 32px; }
.outline { border-right: 2px solid #000; }
.tl-top { display: flex; align-items: flex-start; height: 64px; padding-left: 9px; border-bottom: 2px solid #202020; }
.time { width: 216px; white-space: nowrap; }
.time strong { display: block; padding-left: 54px; font-size: 28px; line-height: 28px; color: #3f9de6; }
.time span { display: block; font-size: 20px; line-height: 30px; color: #1b6ea8; }
.tl-top .search { width: 658px; margin-top: 5px; }
.tt { margin-top: 10px; }
.t1 { margin-left: 30px; }
.t2 { margin-left: 33px; }
.t3 { margin-left: 21px; }
.t4 { margin-left: 23px; }
.t5 { margin-left: 36px; }
.tt svg { width: 34px; height: 30px; }
.tt.t3 svg { width: 28px; height: 28px; }
.tt.t4 svg { width: 30px; height: 30px; }
.tt.t5 svg { width: 34px; height: 32px; }
.cols { display: grid; grid-template-columns: 124px 64px 66px 424px 274px 1fr; align-items: center; }
.head { grid-template-columns: 124px 64px 66px 424px 274px 234px 1fr; height: 38px; font-size: 19px; border-bottom: 2px solid #202020; }
.head .cell { height: 26px; line-height: 26px; padding-left: 10px; border-left: 2px solid #0a0a0a; }
.head .tag { padding-left: 25px; }
.head .switches { padding-left: 7px; }
.av, .switches { display: flex; align-items: center; gap: 4px; }
.av > *, .switches > * { flex: none; width: 26px; height: 26px; }
.av .first { margin-left: -3px; }
.tag svg { width: 26px; height: 26px; }
.fx { font: italic 26px/24px "Noto Sans", sans-serif; color: #b3b3b3; }
.switches { color: #b3b3b3; }
.dim { color: #6e6e6e; }
.box { background: #222; }
.row { height: 34px; padding-bottom: 2px; border-bottom: 2px solid #1e1e1e; background: #262626; }
.layer { background: #303030; }
.row .switches { padding-left: 9px; }
.twirl { display: flex; align-items: center; gap: 7px; padding-left: 12px; }
.arrow { width: 16px; height: 16px; }
.swatch { width: 24px; height: 24px; background: #b43737; }
.num { padding-left: 14px; font-weight: 700; }
.lname { display: flex; align-items: center; gap: 18px; padding-left: 8px; font-weight: 700; }
.lname svg { width: 18px; height: 22px; }
.parent { display: flex; align-items: center; gap: 12px; padding-left: 9px; }
.parent > svg, .tail > svg { width: 26px; height: 26px; }
.parent .select { width: 178px; height: 28px; border: 0; border-radius: 0; line-height: 28px; }
.prop { grid-column: 2 / 5; display: flex; align-items: center; }
.prop .arrow { margin-right: 14px; }
.prop .short { margin-right: 10px; }
.watch { width: 24px; height: 28px; margin-right: 13px; }
.l1 { padding-left: 46px; }
.l2 { padding-left: 80px; }
.l3 { padding-left: 145px; }
.tail { grid-column: 5 / 7; display: flex; align-items: center; padding-left: 9px; }
.tail button svg { width: 22px; height: 22px; }
.animate { padding-left: 149px; gap: 5px; }
.link { padding-left: 309px; }
.expr { padding-left: 41px; }
.expr .eq { margin-right: 37px; border: 2px solid #2f2f2f; }
.tail .eq svg { width: 28px; height: 28px; }
.expr > svg { margin-right: 10px; }
.reset { color: #3f9de6; }

.tracks { display: flex; flex-direction: column; min-width: 0; overflow: hidden; background: #262626; }
.nav { display: flex; height: 22px; padding: 4px 12px 2px 0; background: #151515; border-radius: 12px 14px 0 0; }
.grip { position: relative; width: 12px; background: #2d8ceb; }
.grip-l { margin-right: 2px; border-radius: 10px 0 0 10px; }
.grip-r { border-radius: 0 8px 8px 0; }
.nav-range { flex: 1093; background: #666; box-shadow: 0 0 0 2px #000; }
.nav-rest { flex: 426; display: flex; justify-content: flex-end; background: #423d35; box-shadow: 0 0 0 2px #4a4034; }
.nav-rest i { width: 4px; margin-right: 21px; background: #2d8ceb; }
.ruler { display: flex; height: 38px; margin-left: -66px; font-size: 20px; line-height: 30px; }
.ruler span { flex: none; width: 160px; text-align: center; background: linear-gradient(#959595, #959595) center bottom / 2px 10px no-repeat; }
.work { display: flex; height: 34px; padding-left: 2px; border: solid #000; border-width: 2px 0; }
.work .grip { width: 10px; }
.work-range { flex: 1; background: linear-gradient(#6c6c6c 2px, #5e5e5e 2px); }
.cache { height: 8px; margin-left: 14px; background: #0fbf1f; border-bottom: 2px solid #202020; }
.track { display: flex; height: 34px; padding-left: 14px; border-bottom: 2px solid #1e1e1e; }
.track > *, .track-rest i { flex: 1; background: #333; }
.layer-track { background: #303030; }
.layer-track > i { background: #7a3939; border: solid #683030; border-width: 0 0 2px; box-shadow: inset 2px 2px #874646; }
.track code { padding-left: 13px; font: 24px/32px "DejaVu Sans Mono", monospace; color: #a0a0a0; }
.track-rest { flex: 1; display: flex; padding-left: 14px; }
.side { display: flex; flex-direction: column; gap: 12px; padding-top: 64px; border-left: 2px solid #1c1c1c; background: #242424; overflow: hidden; }
.marker { width: 24px; height: 28px; margin-left: 5px; }
.shape { width: 30px; height: 28px; }
```
